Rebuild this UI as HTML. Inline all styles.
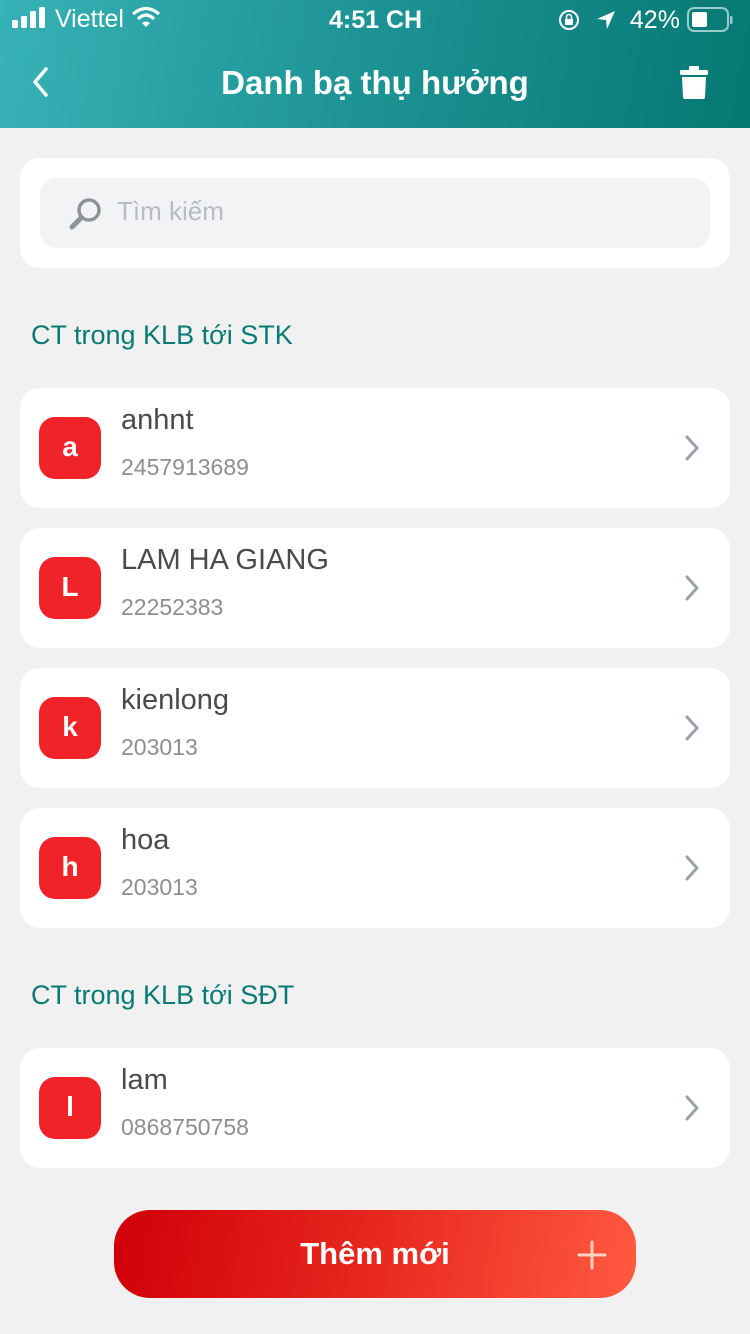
<!DOCTYPE html>
<html><head><meta charset="utf-8"><style>
*{margin:0;padding:0;box-sizing:border-box}
body{width:750px;height:1334px;background:#f1f1f1;font-family:"Liberation Sans","DejaVu Sans",sans-serif;position:relative;overflow:hidden}
.hdr{position:absolute;left:0;top:0;width:750px;height:128px;background:linear-gradient(100deg,#37b2b6 0%,#1f9597 45%,#067873 100%);color:#fff}
.sb{position:absolute;top:6px;font-size:25px;font-weight:bold}
.title{position:absolute;top:64px;left:0;width:750px;text-align:center;font-size:33px;font-weight:bold}
.box{position:absolute;left:20px;background:#fff;border-radius:20px}
.search{top:158px;width:710px;height:110px}
.sin{position:absolute;left:20px;top:20px;width:670px;height:70px;background:#f2f3f5;border-radius:16px}
.sin span{position:absolute;left:77px;top:18px;font-size:26px;color:#b8bcc2}
.sec{position:absolute;left:31px;font-size:27px;color:#0a7a74}
.card{width:710px;height:120px}
.av{position:absolute;left:19px;top:29px;width:62px;height:62px;border-radius:16px;background:#ef2328;color:#fff;font-weight:bold;font-size:28px;text-align:center;line-height:60px}
.nm{position:absolute;left:101px;top:16px;font-size:29px;color:#4a4a4a}
.num{position:absolute;left:101px;top:66px;font-size:23px;color:#8e8e8e}
.chev{position:absolute;right:30px;top:46px}
.btn{position:absolute;left:114px;top:1210px;width:522px;height:88px;border-radius:36px;background:linear-gradient(100deg,#d00008 0%,#e8281f 50%,#ff5a40 100%);color:#fff;font-size:31px;font-weight:bold;text-align:center;line-height:88px}
</style></head><body>
<div class="hdr">
<div class="sb" style="left:12px;top:5px">
<svg width="36" height="22" style="vertical-align:-2px"><rect x="0" y="13" width="6" height="8" rx="1.5" fill="#fff"/><rect x="9" y="9" width="6" height="12" rx="1.5" fill="#fff"/><rect x="18" y="4" width="6" height="17" rx="1.5" fill="#fff"/><rect x="27" y="0" width="6" height="21" rx="1.5" fill="#fff"/></svg><span style="font-weight:normal"> Viettel</span>
<svg width="30" height="22" viewBox="0 0 30 22" style="vertical-align:-1px"><path d="M2 8 Q15 -3 28 8" stroke="#fff" stroke-width="3.2" fill="none"/><path d="M7 13 Q15 5 23 13" stroke="#fff" stroke-width="3.2" fill="none"/><path d="M11 17 L15 21 L19 17 Q15 14 11 17Z" fill="#fff"/></svg>
</div>
<div class="sb" style="left:329px">4:51 CH</div>
<div class="sb" style="left:558px;font-weight:normal">
<svg width="22" height="22" style="vertical-align:-3px"><circle cx="11" cy="11" r="9" stroke="#fff" stroke-width="2" fill="none"/><rect x="7" y="10" width="8" height="6" fill="#fff"/><path d="M8.5 10 V8 a2.5 2.5 0 0 1 5 0 V10" stroke="#fff" stroke-width="1.6" fill="none"/></svg>
<svg width="22" height="22" style="vertical-align:-3px;margin-left:8px"><path d="M20 2 L2 10 L11 11 L12 20Z" fill="#fff"/></svg>
<span style="margin-left:6px">42%</span>
<svg width="46" height="26" style="vertical-align:-5px"><rect x="1" y="1" width="40" height="23" rx="6" stroke="#9cc" stroke-width="2" fill="none"/><rect x="5" y="5" width="15" height="15" rx="2" fill="#fff"/><rect x="43" y="9" width="2.5" height="8" rx="1" fill="#9cc"/></svg>
</div>
<svg style="position:absolute;left:30px;top:66px" width="20" height="32"><path d="M16 3 L5 16 L16 29" stroke="#fff" stroke-width="3.5" fill="none" stroke-linecap="round" stroke-linejoin="round"/></svg>
<div class="title">Danh bạ thụ hưởng</div>
<svg style="position:absolute;left:680px;top:66px" width="28" height="34"><rect x="0" y="4" width="28" height="5" rx="1.5" fill="#fff"/><rect x="9" y="0" width="10" height="5" rx="1.5" fill="#fff"/><path d="M2 11 H26 L25 31 Q25 33 23 33 H5 Q3 33 3 31Z" fill="#fff"/></svg>
</div>

<div class="box search"><div class="sin">
<svg style="position:absolute;left:28px;top:18px" width="36" height="36"><circle cx="21" cy="14" r="10" stroke="#8f9399" stroke-width="3.5" fill="none"/><path d="M13 22 L4 31" stroke="#8f9399" stroke-width="5" stroke-linecap="round"/></svg>
<span>Tìm kiếm</span></div></div>

<div class="sec" style="top:320px">CT trong KLB tới STK</div>
<div class="box card" style="top:388px"><div class="av">a</div><div class="nm">anhnt</div><div class="num">2457913689</div><svg class="chev" width="16" height="28"><path d="M3 3 L13 14 L3 25" stroke="#9aa0aa" stroke-width="3" fill="none" stroke-linecap="round" stroke-linejoin="round"/></svg></div>
<div class="box card" style="top:528px"><div class="av">L</div><div class="nm">LAM HA GIANG</div><div class="num">22252383</div><svg class="chev" width="16" height="28"><path d="M3 3 L13 14 L3 25" stroke="#9aa0aa" stroke-width="3" fill="none" stroke-linecap="round" stroke-linejoin="round"/></svg></div>
<div class="box card" style="top:668px"><div class="av">k</div><div class="nm">kienlong</div><div class="num">203013</div><svg class="chev" width="16" height="28"><path d="M3 3 L13 14 L3 25" stroke="#9aa0aa" stroke-width="3" fill="none" stroke-linecap="round" stroke-linejoin="round"/></svg></div>
<div class="box card" style="top:808px"><div class="av">h</div><div class="nm">hoa</div><div class="num">203013</div><svg class="chev" width="16" height="28"><path d="M3 3 L13 14 L3 25" stroke="#9aa0aa" stroke-width="3" fill="none" stroke-linecap="round" stroke-linejoin="round"/></svg></div>

<div class="sec" style="top:980px">CT trong KLB tới SĐT</div>
<div class="box card" style="top:1048px"><div class="av">l</div><div class="nm">lam</div><div class="num">0868750758</div><svg class="chev" width="16" height="28"><path d="M3 3 L13 14 L3 25" stroke="#9aa0aa" stroke-width="3" fill="none" stroke-linecap="round" stroke-linejoin="round"/></svg></div>

<div class="btn">Thêm mới
<svg style="position:absolute;left:463px;top:30px" width="30" height="30"><path d="M15 2 V28 M2 15 H28" stroke="#ffd0c4" stroke-width="3" stroke-linecap="round"/></svg></div>
</body></html>
